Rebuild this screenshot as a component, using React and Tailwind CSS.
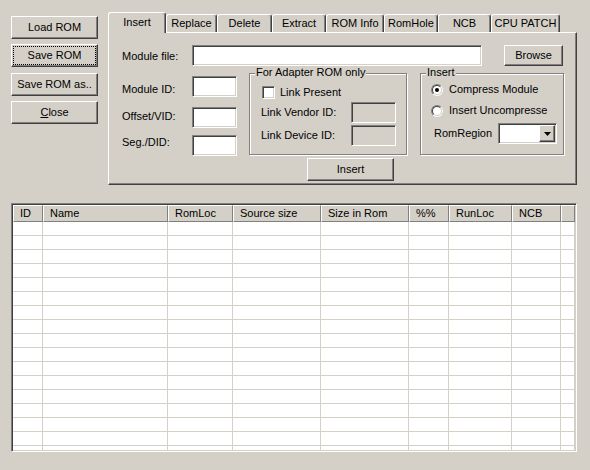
import React from 'react';

// win2000 style bevels
const raised = 'bg-[#d4d0c8] border border-t-white border-l-white border-r-[#404040] border-b-[#404040] shadow-[inset_-1px_-1px_#808080]';
const sunken = 'border border-t-[#808080] border-l-[#808080] border-r-white border-b-white shadow-[inset_1px_1px_#404040,inset_-1px_-1px_#d4d0c8]';
const etched = 'relative border border-[#808080] shadow-[inset_1px_1px_white,1px_1px_white]';

const TABS = [
  { label: 'Insert',    w: 'w-[58px]', active: true },
  { label: 'Replace',   w: 'w-[51px]' },
  { label: 'Delete',    w: 'w-[55px]' },
  { label: 'Extract',   w: 'w-[54px]' },
  { label: 'ROM Info',  w: 'w-[58px]' },
  { label: 'RomHole',   w: 'w-[54px]' },
  { label: 'NCB',       w: 'w-[53px]' },
  { label: 'CPU PATCH', w: 'w-[69px]' },
];

const COLS = [
  { label: 'ID',          w: 'w-[30px]' },
  { label: 'Name',        w: 'w-[125px]' },
  { label: 'RomLoc',      w: 'w-[65px]' },
  { label: 'Source size', w: 'w-[88px]' },
  { label: 'Size in Rom', w: 'w-[88px]' },
  { label: '%%',          w: 'w-[40px]' },
  { label: 'RunLoc',      w: 'w-[63px]' },
  { label: 'NCB',         w: 'w-[49px]' },
];

function Btn({ children, focus, className = '' }) {
  return (
    <button
      className={`${raised} h-[23px] flex items-center justify-center leading-[13px] ${focus ? 'outline-1 outline-dotted outline-black outline-offset-[-3px]' : ''} ${className}`}
    >
      {children}
    </button>
  );
}

function Field({ className = '', disabled }) {
  return <div className={`${sunken} h-[21px] shrink-0 ${disabled ? 'bg-[#d4d0c8]' : 'bg-white'} ${className}`} />;
}

function Radio({ checked }) {
  return (
    <div className="w-[12px] h-[12px] rounded-full border border-t-[#808080] border-l-[#808080] border-r-white border-b-white shrink-0">
      <div className="w-full h-full rounded-full border border-t-[#404040] border-l-[#404040] border-r-[#d4d0c8] border-b-[#d4d0c8] bg-white flex items-center justify-center">
        {checked && <div className="w-[4px] h-[4px] rounded-full bg-black" />}
      </div>
    </div>
  );
}

function Legend({ children }) {
  return (
    <span className="absolute -top-[8px] left-[5px] px-[1px] bg-[#d4d0c8] leading-[13px]">{children}</span>
  );
}

export default function App() {
  return (
    <div className="w-[590px] h-[470px] overflow-hidden bg-[#d4d0c8] text-black text-[11px] leading-[13px] font-['Liberation_Sans',Arial,sans-serif]">
      <div className="flex pt-[12px] pl-[11px]">
        {/* left buttons */}
        <div className="flex flex-col w-[87px] pt-[4px] shrink-0">
          <Btn>Load ROM</Btn>
          <Btn focus className="mt-[5px]">Save ROM</Btn>
          <Btn className="mt-[6px]">Save ROM as..</Btn>
          <Btn className="mt-[5px]"><span className="underline">C</span>lose</Btn>
        </div>

        {/* tab control */}
        <div className="ml-[10px] w-[469px] shrink-0">
          <div className="flex items-end h-[20px]">
            {TABS.map(t => (
              <div
                key={t.label}
                className={`${t.w} shrink-0 flex items-center justify-center rounded-t-[3px] bg-[#d4d0c8] border-t border-l border-r border-t-white border-l-white border-r-[#404040] shadow-[inset_-1px_0_#808080] ${t.active ? 'h-[21px] -mb-[1px] relative z-10 pb-[1px]' : 'h-[18px]'}`}
              >
                {t.label}
              </div>
            ))}
          </div>

          <div className="h-[153px] border border-t-white border-l-white border-r-[#404040] border-b-[#404040] shadow-[inset_-1px_-1px_#808080] pl-[13px]">
            {/* module file */}
            <div className="flex items-start mt-[12px] h-[21px]">
              <span className="w-[70px] pt-[5px] shrink-0">Module file:</span>
              <Field className="w-[290px]" />
              <Btn className="ml-[22px] w-[59px] !h-[21px]">Browse</Btn>
            </div>

            <div className="flex items-start mt-[7px]">
              {/* ids */}
              <div className="flex flex-col w-[115px] shrink-0">
                <div className="flex items-start mt-[3px]">
                  <span className="w-[70px] pt-[7px] shrink-0">Module ID:</span>
                  <Field className="w-[45px]" />
                </div>
                <div className="flex items-start mt-[10px]">
                  <span className="w-[70px] pt-[3px] shrink-0">Offset/VID:</span>
                  <Field className="w-[45px]" />
                </div>
                <div className="flex items-start mt-[7px]">
                  <span className="w-[70px] pt-[1px] shrink-0">Seg./DID:</span>
                  <Field className="w-[45px]" />
                </div>
              </div>

              {/* adapter rom group */}
              <div className={`${etched} ml-[12px] w-[158px] h-[82px] shrink-0 pt-[12px] pl-[12px]`}>
                <Legend>For Adapter ROM only</Legend>
                <div className="flex items-center h-[13px]">
                  <div className={`${sunken} bg-white w-[13px] h-[13px] shrink-0`} />
                  <span className="ml-[5px]">Link Present</span>
                </div>
                <div className="flex items-center mt-[3px]">
                  <span className="w-[90px] -ml-[1px] shrink-0">Link Vendor ID:</span>
                  <Field disabled className="w-[45px]" />
                </div>
                <div className="flex items-center mt-[2px]">
                  <span className="w-[90px] -ml-[1px] shrink-0">Link Device ID:</span>
                  <Field disabled className="w-[45px]" />
                </div>
              </div>

              {/* insert mode group */}
              <div className={`${etched} ml-[13px] w-[144px] h-[82px] shrink-0 pt-[9px] pl-[10px]`}>
                <Legend>Insert</Legend>
                <div className="flex items-center h-[13px]">
                  <Radio checked />
                  <span className="ml-[6px]">Compress Module</span>
                </div>
                <div className="flex items-center h-[13px] mt-[8px]">
                  <Radio />
                  <span className="ml-[6px]">Insert Uncompresse</span>
                </div>
                <div className="flex items-center mt-[6px]">
                  <span className="ml-[3px] w-[64px] shrink-0">RomRegion</span>
                  <div className={`${sunken} bg-white w-[59px] h-[21px] shrink-0 flex justify-end p-[1px]`}>
                    <div className={`${raised} w-[16px] h-full flex items-center justify-center`}>
                      <svg width="7" height="4" viewBox="0 0 7 4"><path d="M0 0h7L3.5 4z" fill="#000" /></svg>
                    </div>
                  </div>
                </div>
              </div>
            </div>

            <Btn className="mt-[2px] ml-[185px] w-[87px]">Insert</Btn>
          </div>
        </div>
      </div>

      {/* module list */}
      <div className={`${sunken} mt-[18px] ml-[11px] w-[566px] h-[249px] bg-white p-[1px] overflow-hidden`}>
        <div className="flex h-[17px]">
          {COLS.map(c => (
            <div key={c.label} className={`${c.w} shrink-0 bg-[#d4d0c8] border border-t-white border-l-white border-r-[#808080] border-b-[#808080] pl-[6px] flex items-center`}>
              {c.label}
            </div>
          ))}
          <div className="w-[14px] shrink-0 bg-[#d4d0c8] border border-t-white border-l-white border-r-[#808080] border-b-[#808080]" />
        </div>
        {Array.from({ length: 17 }).map((_, r) => (
          <div key={r} className="flex h-[14px]">
            {COLS.map(c => (
              <div key={c.label} className={`${c.w} shrink-0 border-r border-b border-[#d4d0c8]`} />
            ))}
            <div className="w-[14px] shrink-0 border-r border-b border-[#d4d0c8]" />
          </div>
        ))}
      </div>
    </div>
  );
}
